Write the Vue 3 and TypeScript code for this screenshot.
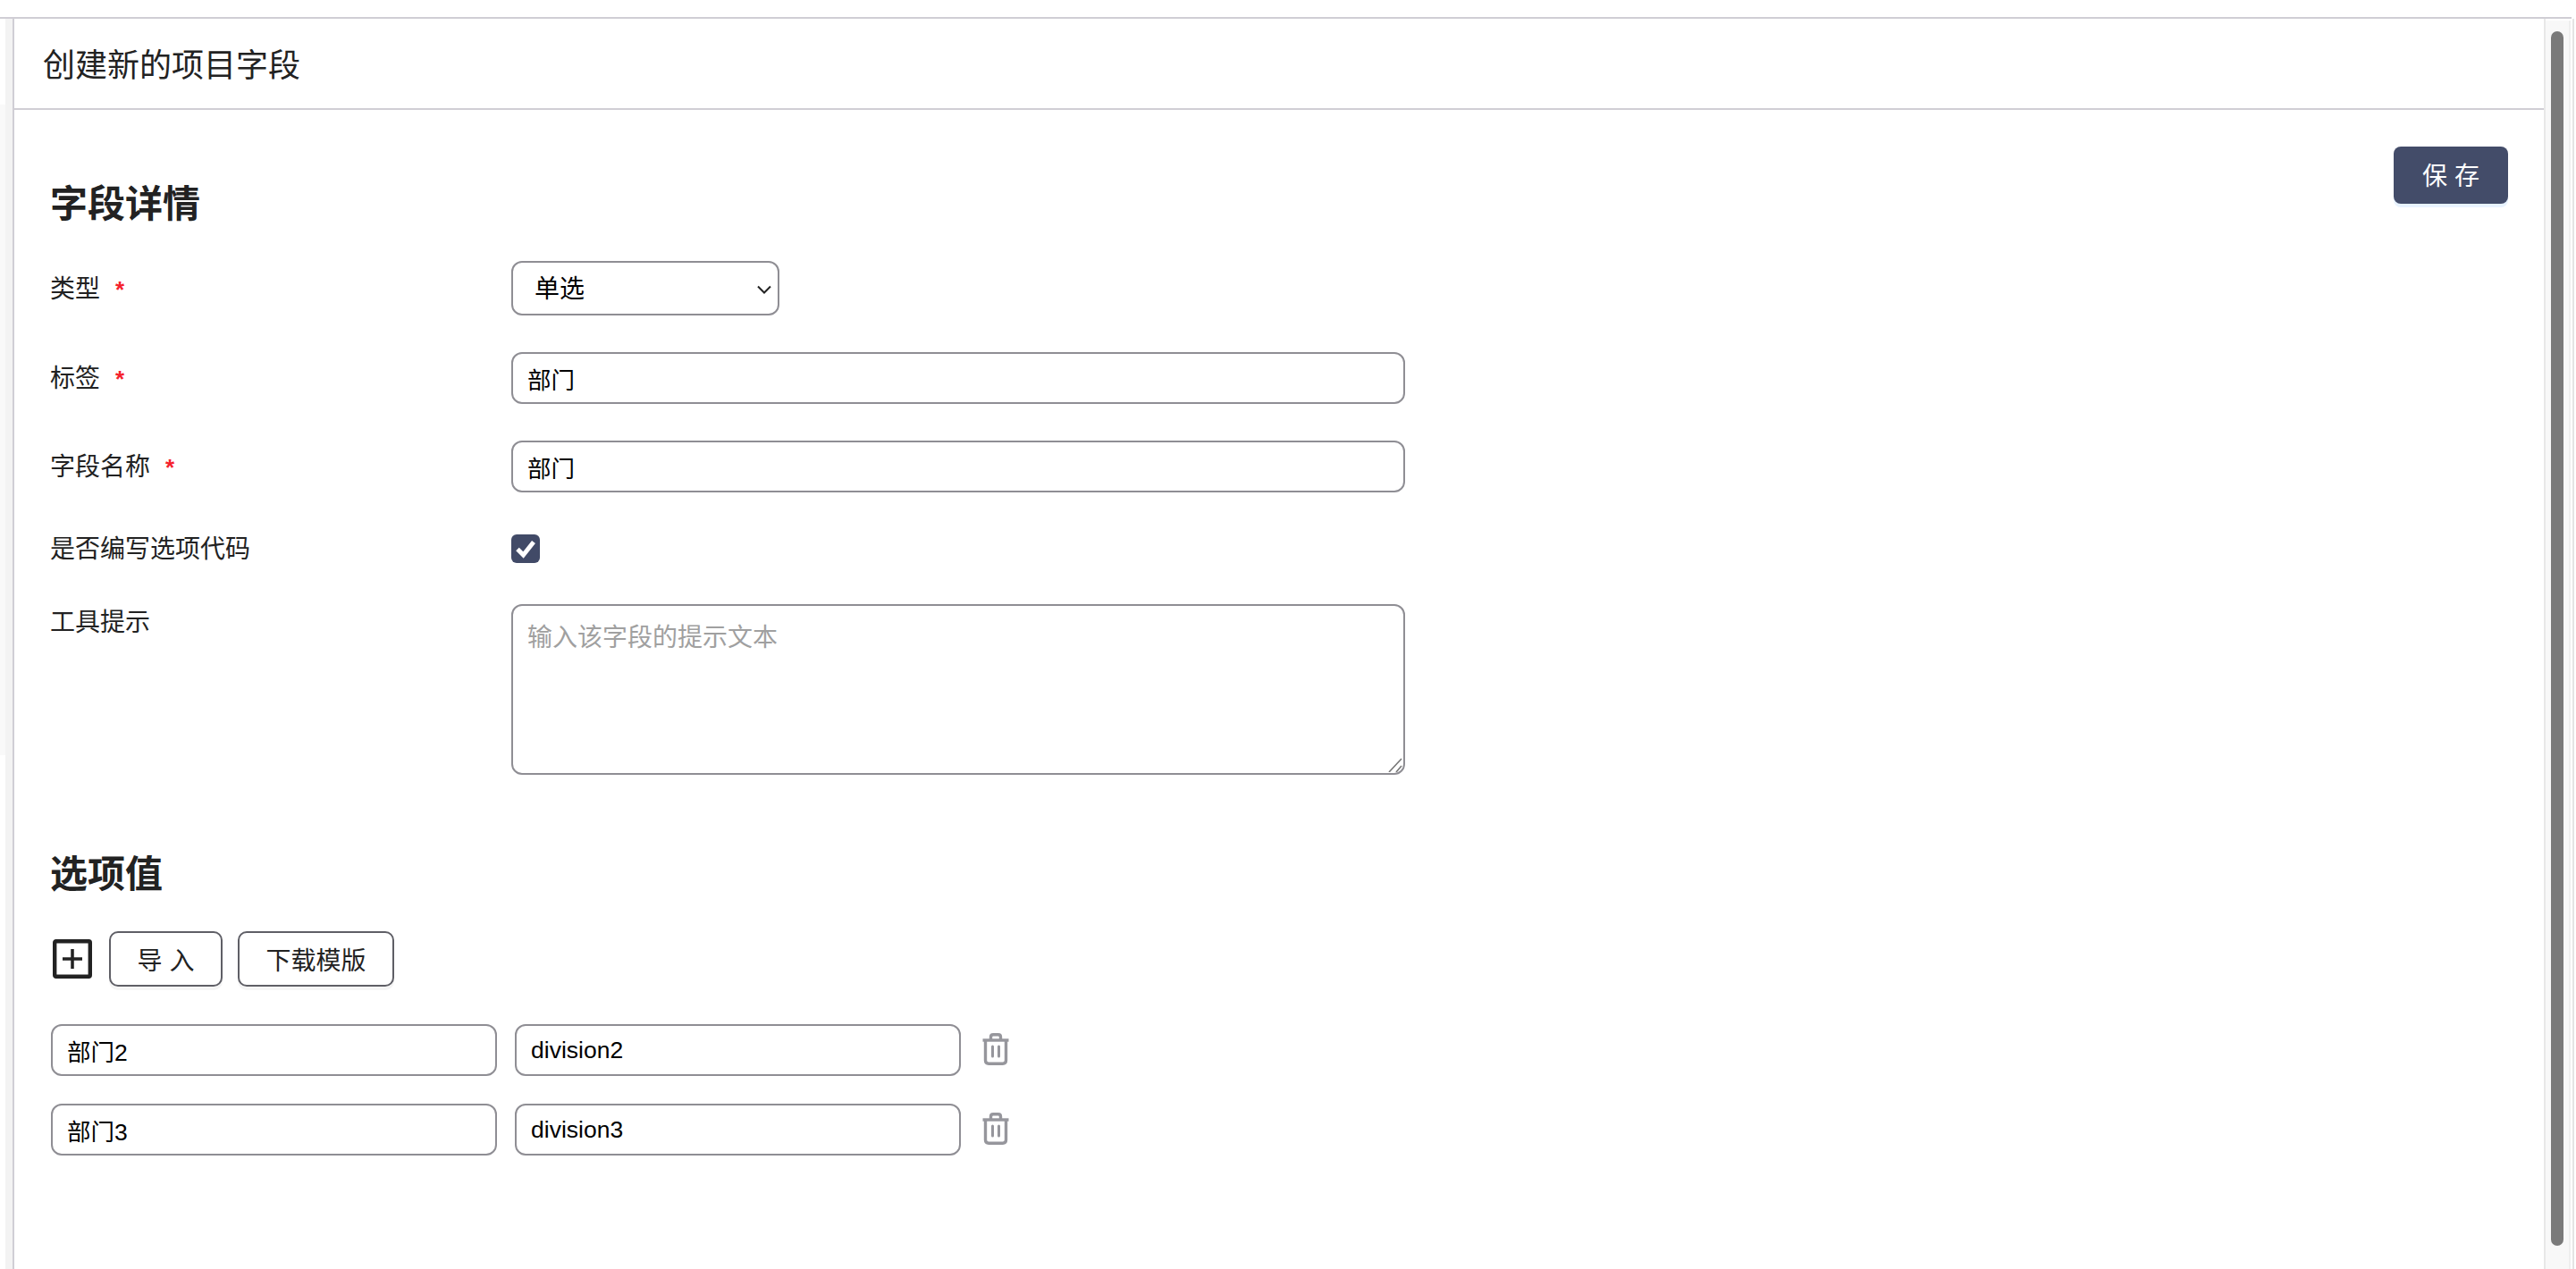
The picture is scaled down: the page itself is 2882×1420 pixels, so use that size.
<template>
  <div class="page">
    <div class="frame">
      <div class="side-strip">
        <div class="strip-outer"></div>
        <div class="strip-inner"></div>
      </div>
      <main class="panel">
        <header class="panel-header">创建新的项目字段</header>
        <div class="panel-body">
          <div class="form-col">
            <h2 class="section-title details-title">字段详情</h2>
            <div class="field field-select">
              <label class="field-label">类型<span class="required">*</span></label>
              <div class="select-wrap">
                <select v-model="form.type" class="select">
                  <option>单选</option>
                  <option>多选</option>
                </select>
                <svg class="select-arrow" viewBox="0 0 16 10" fill="none">
                  <path d="M1 1.5 8 8.5 15 1.5" stroke="#222" stroke-width="2" />
                </svg>
              </div>
            </div>
            <div class="field">
              <label class="field-label">标签<span class="required">*</span></label>
              <input v-model="form.label" class="input input-wide" />
            </div>
            <div class="field">
              <label class="field-label">字段名称<span class="required">*</span></label>
              <input v-model="form.name" class="input input-wide" />
            </div>
            <div class="field field-check">
              <label class="field-label">是否编写选项代码</label>
              <span class="checkbox">
                <svg viewBox="0 0 32 32" fill="none">
                  <path d="M7 16.5 13.5 23 25 8.5" stroke="#fff" stroke-width="5" />
                </svg>
              </span>
            </div>
            <div class="field field-tip">
              <label class="field-label">工具提示</label>
              <div class="textarea-wrap">
                <textarea class="textarea" placeholder="输入该字段的提示文本"></textarea>
                <svg class="resize-grip" viewBox="0 0 16 16" fill="none" stroke="#777" stroke-width="1.6">
                  <path d="M1 16 15 1M9 16 15 9" />
                </svg>
              </div>
            </div>

            <h2 class="section-title options-title">选项值</h2>
            <div class="toolbar">
              <svg class="add-icon" viewBox="0 0 44 44" fill="none">
                <rect x="2.2" y="2.2" width="39.6" height="39.6" rx="1.5" stroke="#222" stroke-width="4.4" />
                <path d="M11 22H33M22 11V33" stroke="#222" stroke-width="3.5" />
              </svg>
              <button class="btn btn-import">导 入</button>
              <button class="btn btn-template">下载模版</button>
            </div>
            <div v-for="row in optionRows" :key="row.code" class="option-row">
              <input v-model="row.label" class="input input-option" />
              <input v-model="row.code" class="input input-option" />
              <svg class="trash-icon" viewBox="0 0 30 36" fill="none" stroke="#96969c" stroke-width="3.4">
                <path d="M0.5 8H29.5" />
                <path d="M9.5 8V4.5Q9.5 1.8 12.2 1.8H17.8Q20.5 1.8 20.5 4.5V8" />
                <path d="M3.5 8V30.5Q3.5 34.2 7.2 34.2H22.8Q26.5 34.2 26.5 30.5V8" />
                <path d="M11.5 15V26M18.5 15V26" stroke-width="3" stroke-linecap="round" />
              </svg>
            </div>
          </div>
          <button class="btn-save">保 存</button>
        </div>
      </main>
      <div class="scrollbar">
        <div class="scrollbar-thumb"></div>
      </div>
    </div>
    <div class="edge-line"></div>
  </div>
</template>

<script setup lang="ts">
import { reactive } from 'vue'

const form = reactive({
  type: '单选',
  label: '部门',
  name: '部门',
})

const optionRows = reactive([
  { label: '部门2', code: 'division2' },
  { label: '部门3', code: 'division3' },
])
</script>

<style>
html,
body {
  margin: 0;
  background: #fff;
  overflow: hidden;
}
</style>

<style scoped>
.page {
  height: 1420px;
  padding-top: 19px;
  box-sizing: border-box;
  overflow: hidden;
  display: flex;
  font-family: 'Liberation Sans', 'Noto Sans CJK SC', sans-serif;
  color: #222;
}

.frame {
  height: 100%;
  width: 2877px;
  box-sizing: border-box;
  border-top: 2px solid #d0ced5;
  display: flex;
}

.edge-line {
  width: 2px;
  margin: 2px 0 0 1px;
  background: #e4e4e4;
}

.side-strip {
  width: 14px;
  display: flex;
}

.strip-outer {
  width: 6px;
  height: 728px;
  margin-top: 96px;
  background: #f9f9f9;
}

.strip-inner {
  width: 8px;
  background: #f3f3f3;
}

.panel {
  width: 2834px;
  box-sizing: border-box;
  border-left: 2px solid #d0ced5;
  border-right: 2px solid #e8e8e8;
  display: flex;
  flex-direction: column;
}

.panel-header {
  height: 102px;
  box-sizing: border-box;
  border-bottom: 2px solid #d0ced5;
  padding: 27px 0 0 32px;
  font-size: 36px;
  line-height: 52px;
}

.panel-body {
  display: flex;
  justify-content: space-between;
  align-items: flex-start;
  padding: 41px 40px 0 41px;
}

.form-col {
  display: flex;
  flex-direction: column;
}

.section-title {
  margin: 0;
  font-size: 42px;
  line-height: 50px;
  font-weight: 700;
  color: #222;
}

.details-title {
  margin-top: 40px;
  margin-left: -1px;
}

.field {
  display: grid;
  grid-template-columns: 515px auto;
  align-items: center;
  justify-content: start;
  margin-top: 41px;
  font-size: 28px;
}

.field-select {
  margin-top: 38px;
}

.field-check {
  margin-top: 42px;
}

.field-tip {
  margin-top: 41px;
  align-items: start;
}

.field-label {
  line-height: 40px;
  padding-top: 2px;
  margin-left: -1px;
}

.field-tip .field-label {
  margin-top: -1px;
}

.required {
  color: #f5222d;
  margin-left: 17px;
  font-size: 26px;
  font-weight: 700;
}

.select-wrap {
  position: relative;
  width: 300px;
  height: 61px;
}

.select {
  appearance: none;
  width: 100%;
  height: 100%;
  box-sizing: border-box;
  border: 2px solid #8f8e94;
  border-radius: 12px;
  background: #fff;
  padding: 2px 0 0 24px;
  font: inherit;
  font-size: 28px;
  color: #000;
}

.select-arrow {
  position: absolute;
  right: 9px;
  top: 27px;
  width: 16px;
  height: 10px;
}

.input {
  height: 58px;
  box-sizing: border-box;
  border: 2px solid #8f8e94;
  border-radius: 12px;
  background: #fff;
  padding: 0 16px;
  font-family: inherit;
  font-size: 26.5px;
  color: #000;
  outline: none;
}

.input-wide {
  width: 1000px;
}

.input-option {
  width: 499px;
}

.checkbox {
  display: block;
  width: 32px;
  height: 32px;
  border-radius: 6px;
  background: #414a67;
}

.checkbox svg {
  display: block;
  width: 32px;
  height: 32px;
}

.textarea-wrap {
  position: relative;
  width: 1000px;
  height: 191px;
}

.textarea {
  display: block;
  width: 100%;
  height: 100%;
  box-sizing: border-box;
  border: 2px solid #8f8e94;
  border-radius: 12px;
  padding: 18px 16px;
  font-family: inherit;
  font-size: 28px;
  line-height: 36px;
  color: #000;
  outline: none;
  resize: none;
}

.textarea::placeholder {
  color: #a0a0a0;
}

.resize-grip {
  position: absolute;
  right: 3px;
  bottom: 3px;
  width: 16px;
  height: 16px;
}

.options-title {
  margin-top: 87px;
  margin-left: -1px;
}

.toolbar {
  display: flex;
  align-items: center;
  gap: 17px;
  margin-top: 38px;
  padding-left: 2px;
}

.add-icon {
  width: 44px;
  height: 44px;
  margin-right: 2px;
}

.btn {
  height: 62px;
  box-sizing: border-box;
  border: 2px solid #5f5f66;
  border-radius: 10px;
  background: #fff;
  box-shadow: 0 4px 0 #f5f5f5;
  font-family: inherit;
  font-size: 28px;
  color: #222;
  padding: 0;
}

.btn-import {
  width: 127px;
}

.btn-template {
  width: 175px;
}

.option-row {
  display: flex;
  align-items: center;
  gap: 20px;
  margin-top: 42px;
}

.option-row + .option-row {
  margin-top: 31px;
}

.trash-icon {
  width: 30px;
  height: 36px;
  margin-left: 4px;
  margin-top: -2px;
}

.btn-save {
  width: 128px;
  height: 64px;
  border: none;
  border-radius: 8px;
  background: #434c69;
  box-shadow: 0 4px 0 #e8f3ff;
  color: #fff;
  font-family: inherit;
  font-size: 28px;
  padding: 0 0 3px;
}

.scrollbar {
  width: 28px;
  height: 1397px;
  margin-top: 2px;
  box-sizing: border-box;
  background: #f8f8f8;
  border-right: 2px solid #eee;
  padding: 12px 0 0 6px;
}

.scrollbar-thumb {
  width: 14px;
  height: 1359px;
  border-radius: 7px;
  background: #7a7a7a;
}
</style>
